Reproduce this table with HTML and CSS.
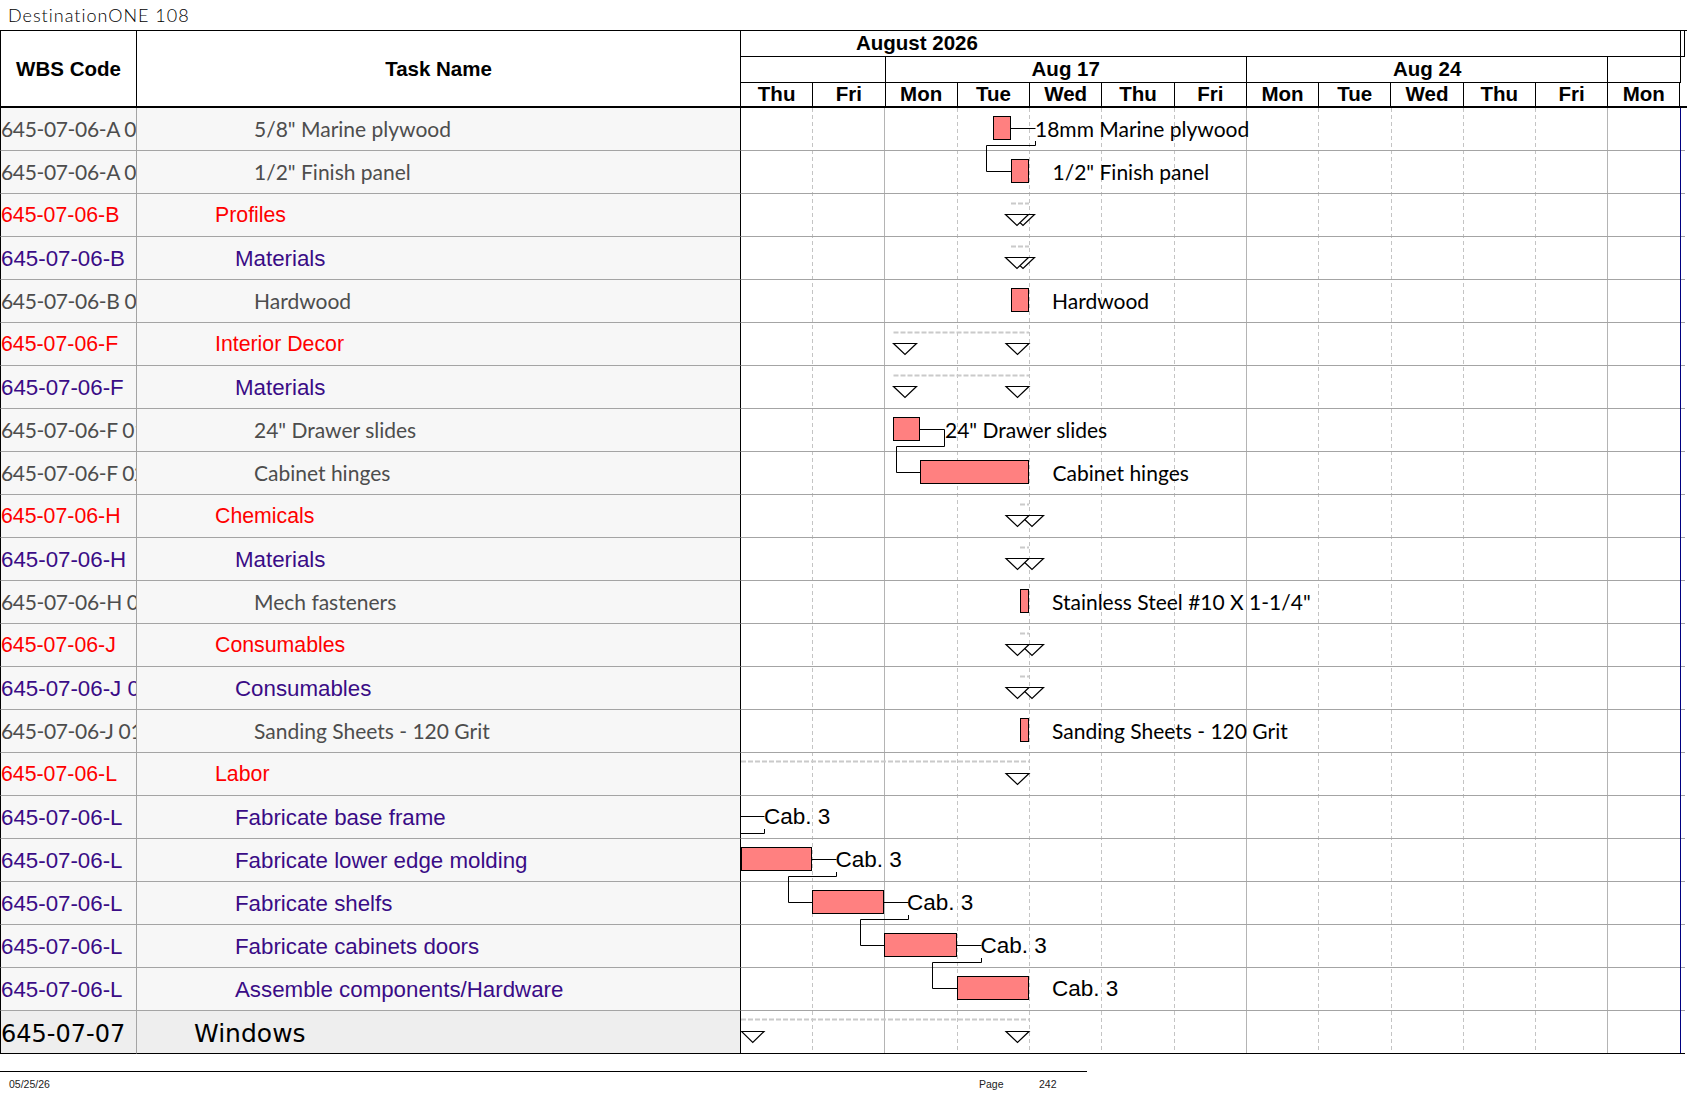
FILE: index.html
```html
<!DOCTYPE html>
<html>
<head>
<meta charset="utf-8">
<title>DestinationONE 108</title>
<link rel="stylesheet" href="styles.css">
</head>
<body>
<div class="title">DestinationONE 108</div>
<div class="sheet">
  <div class="hc hwbs">WBS Code</div>
  <div class="hc htask">Task Name</div>
  <div class="tl-head">
    <div class="tier1"><div class="month">August 2026</div></div>
    <div class="tier2">
      <div class="wk w2"></div><div class="wk w5">Aug 17</div><div class="wk w5">Aug 24</div><div class="wk w1"></div>
    </div>
    <div class="tier3">
      <div class="day">Thu</div><div class="day">Fri</div><div class="day">Mon</div><div class="day">Tue</div><div class="day">Wed</div><div class="day">Thu</div><div class="day">Fri</div><div class="day">Mon</div><div class="day">Tue</div><div class="day">Wed</div><div class="day">Thu</div><div class="day">Fri</div><div class="day">Mon</div>
    </div>
  </div>

  <div class="chart">
    <svg class="gantt" width="946" height="946" viewBox="0 0 946 946" xmlns="http://www.w3.org/2000/svg">
      <path class="vdash" d="M71.5 0V945M216.5 0V945M288.5 0V945M360.5 0V945M433.5 0V945M577.5 0V945M650.5 0V945M722.5 0V945M794.5 0V945"/>
      <path class="vsolid" d="M143.5 0V945M505.5 0V945M866.5 0V945"/>
      <path class="hgrid" d="M0 42.5H944M0 85.5H944M0 128.5H944M0 171.5H944M0 214.5H944M0 257.5H944M0 300.5H944M0 343.5H944M0 386.5H944M0 429.5H944M0 472.5H944M0 515.5H944M0 558.5H944M0 601.5H944M0 644.5H944M0 687.5H944M0 730.5H944M0 773.5H944M0 816.5H944M0 859.5H944M0 902.5H944"/>
      <path class="vnavy" d="M939.5 0V945"/>
      <path class="hbottom" d="M0 945.5H944"/>

      <path class="sumline" d="M270 95.5H288M270 138.5H288M152.5 224.5H288M152.5 267.5H288M279 396.5H288M279 439.5H288M279 525.5H288M279 568.5H288M0 653.5H288M0 911.5H288"/>
      <polygon class="ms" points="270.5,106.5 293.5,106.5 282,117.5"/>
      <polygon class="ms" points="264.5,106.5 287.5,106.5 276,117.5"/>
      <polygon class="ms" points="270.5,149.5 293.5,149.5 282,160.5"/>
      <polygon class="ms" points="264.5,149.5 287.5,149.5 276,160.5"/>
      <polygon class="ms" points="152.5,235.5 175.5,235.5 164,246.5"/>
      <polygon class="ms" points="265,235.5 288,235.5 276.5,246.5"/>
      <polygon class="ms" points="152.5,278.5 175.5,278.5 164,289.5"/>
      <polygon class="ms" points="265,278.5 288,278.5 276.5,289.5"/>
      <polygon class="ms" points="279.5,407.5 302.5,407.5 291,418.5"/>
      <polygon class="ms" points="265,407.5 288,407.5 276.5,418.5"/>
      <polygon class="ms" points="279.5,450.5 302.5,450.5 291,461.5"/>
      <polygon class="ms" points="265,450.5 288,450.5 276.5,461.5"/>
      <polygon class="ms" points="279.5,536.5 302.5,536.5 291,547.5"/>
      <polygon class="ms" points="265,536.5 288,536.5 276.5,547.5"/>
      <polygon class="ms" points="279.5,579.5 302.5,579.5 291,590.5"/>
      <polygon class="ms" points="265,579.5 288,579.5 276.5,590.5"/>
      <polygon class="ms" points="265,665.5 288,665.5 276.5,676.5"/>
      <polygon class="ms" points="0.5,923.5 23,923.5 11.75,934.5"/>
      <polygon class="ms" points="265,923.5 288,923.5 276.5,934.5"/>

      <path class="link" d="M269.5 20.5H294.5M294.5 33V37.5H245.5V63.5H270.5"/>
      <path class="link" d="M178.5 321.5H203.5V338.5H155.5V364.5H179.5"/>
      <path class="link" d="M0 708.5H23.5M23.5 721V725.5H0"/>
      <path class="link" d="M70.5 751.5H95.5M95.5 764V768.5H47.5V794.5H71.5"/>
      <path class="link" d="M142.5 794.5H167.5M167.5 807V811.5H119.5V837.5H143.5"/>
      <path class="link" d="M215.5 837.5H240.5M240.5 850V854.5H191.5V880.5H216.5"/>

      <rect class="bar" x="252.5" y="8.5" width="17" height="23"/>
      <rect class="bar" x="270.5" y="51.5" width="17" height="23"/>
      <rect class="bar" x="270.5" y="180.5" width="17" height="23"/>
      <rect class="bar" x="152.5" y="309.5" width="26" height="23"/>
      <rect class="bar" x="179.5" y="352.5" width="108" height="23"/>
      <rect class="bar" x="279.5" y="481.5" width="8" height="23"/>
      <rect class="bar" x="279.5" y="610.5" width="8" height="23"/>
      <rect class="bar" x="0.5" y="739.5" width="70" height="23"/>
      <rect class="bar" x="71.5" y="782.5" width="71" height="23"/>
      <rect class="bar" x="143.5" y="825.5" width="72" height="23"/>
      <rect class="bar" x="216.5" y="868.5" width="71" height="23"/>

      <text class="lbl" x="294" y="29">18mm Marine plywood</text>
      <text class="lbl" x="311.5" y="72">1/2" Finish panel</text>
      <text class="lbl" x="311" y="201">Hardwood</text>
      <text class="lbl" x="204" y="330">24" Drawer slides</text>
      <text class="lbl" x="311.5" y="373">Cabinet hinges</text>
      <text class="lbl" x="311" y="502">Stainless Steel #10 X 1-1/4"</text>
      <text class="lbl" x="311" y="631">Sanding Sheets - 120 Grit</text>
      <text class="lbl-a" x="23" y="716">Cab. 3</text>
      <text class="lbl-a" x="94.5" y="759">Cab. 3</text>
      <text class="lbl-a" x="166" y="802">Cab. 3</text>
      <text class="lbl-a" x="239.5" y="845">Cab. 3</text>
      <text class="lbl-a" x="311" y="888">Cab. 3</text>
    </svg>
  </div>

  <div class="c wbs l3">645-07-06-A 01</div><div class="c task l3">5/8" Marine plywood</div>
  <div class="c wbs l3">645-07-06-A 02</div><div class="c task l3">1/2" Finish panel</div>
  <div class="c wbs l1">645-07-06-B</div><div class="c task l1">Profiles</div>
  <div class="c wbs l2">645-07-06-B</div><div class="c task l2">Materials</div>
  <div class="c wbs l3">645-07-06-B 01</div><div class="c task l3">Hardwood</div>
  <div class="c wbs l1">645-07-06-F</div><div class="c task l1">Interior Decor</div>
  <div class="c wbs l2">645-07-06-F</div><div class="c task l2">Materials</div>
  <div class="c wbs l3">645-07-06-F 01</div><div class="c task l3">24" Drawer slides</div>
  <div class="c wbs l3">645-07-06-F 02</div><div class="c task l3">Cabinet hinges</div>
  <div class="c wbs l1">645-07-06-H</div><div class="c task l1">Chemicals</div>
  <div class="c wbs l2">645-07-06-H</div><div class="c task l2">Materials</div>
  <div class="c wbs l3">645-07-06-H 01</div><div class="c task l3">Mech fasteners</div>
  <div class="c wbs l1">645-07-06-J</div><div class="c task l1">Consumables</div>
  <div class="c wbs l2">645-07-06-J 01</div><div class="c task l2">Consumables</div>
  <div class="c wbs l3">645-07-06-J 01</div><div class="c task l3">Sanding Sheets - 120 Grit</div>
  <div class="c wbs l1">645-07-06-L</div><div class="c task l1">Labor</div>
  <div class="c wbs l2">645-07-06-L</div><div class="c task l2">Fabricate base frame</div>
  <div class="c wbs l2">645-07-06-L</div><div class="c task l2">Fabricate lower edge molding</div>
  <div class="c wbs l2">645-07-06-L</div><div class="c task l2">Fabricate shelfs</div>
  <div class="c wbs l2">645-07-06-L</div><div class="c task l2">Fabricate cabinets doors</div>
  <div class="c wbs l2">645-07-06-L</div><div class="c task l2">Assemble components/Hardware</div>
  <div class="c wbs l0">645-07-07</div><div class="c task l0">Windows</div>
</div>
<div class="foot-rule"></div>
<div class="foot">
  <span class="f-date">05/25/26</span>
  <span class="f-page">Page</span>
  <span class="f-num">242</span>
</div>
</body>
</html>
```

FILE: styles.css
```css
html, body {
  margin: 0;
  padding: 0;
  background: #fff;
}

body {
  width: 1687px;
  font-family: "Liberation Sans", Arial, sans-serif;
  color: #000;
}

.title {
  height: 30px;
  box-sizing: border-box;
  padding-left: 8px;
  font-family: Lato, "Liberation Sans", sans-serif;
  font-weight: 300;
  font-size: 18px;
  line-height: 30px;
  letter-spacing: 1px;
  color: #000;
  white-space: nowrap;
}

.sheet {
  display: grid;
  grid-template-columns: 137px 604px 946px;
  grid-template-rows: 77px repeat(22, 43px);
  border-top: 1px solid #000;
  width: 1687px;
}

.hc {
  box-sizing: border-box;
  border-bottom: 2px solid #000;
  display: flex;
  align-items: center;
  justify-content: center;
  font-family: "Liberation Sans", Arial, sans-serif;
  font-weight: bold;
  font-size: 20.5px;
  background: #fff;
}

.hwbs {
  border-left: 1px solid #000;
  border-right: 1px solid #000;
}

.htask {
  border-right: 1px solid #000;
}

.tl-head {
  box-sizing: border-box;
  border-bottom: 2px solid #000;
  background: #fff;
  font-family: "Liberation Sans", Arial, sans-serif;
  font-weight: bold;
  font-size: 20.5px;
}

.tier1 {
  display: flex;
  height: 26px;
  width: 944px;
  box-sizing: border-box;
  border-right: 1px solid #000;
  border-bottom: 1px solid #000;
}

.month {
  width: 939.64px;
  box-sizing: border-box;
  border-right: 1px solid #000;
  padding-left: 115px;
  line-height: 24px;
  white-space: nowrap;
}

.tier2 {
  display: flex;
  height: 26px;
  width: 939.64px;
  box-sizing: border-box;
  border-bottom: 1px solid #000;
}

.tier3 {
  display: flex;
  height: 23px;
  width: 939.64px;
}

.wk,
.day {
  box-sizing: border-box;
  border-right: 1px solid #000;
  text-align: center;
  white-space: nowrap;
  flex: none;
}

.wk {
  line-height: 24px;
}

.day {
  width: 72.28px;
  line-height: 22px;
}

.w1 { width: 72.28px; }
.w2 { width: 144.56px; }
.w5 { width: 361.4px; }

.chart {
  grid-column: 3;
  grid-row: 2 / span 22;
  background: #fff;
  overflow: hidden;
}

.gantt {
  display: block;
}

.vdash {
  fill: none;
  stroke: #c4c4c4;
  stroke-width: 1;
  stroke-dasharray: 4 3;
}

.vsolid {
  fill: none;
  stroke: #b4b4b4;
  stroke-width: 1;
}

.hgrid {
  fill: none;
  stroke: #a4a4a4;
  stroke-width: 1;
}

.vnavy {
  fill: none;
  stroke: #000080;
  stroke-width: 1;
}

.hbottom {
  fill: none;
  stroke: #000;
  stroke-width: 1;
}

.sumline {
  fill: none;
  stroke: #cacaca;
  stroke-width: 2;
  stroke-dasharray: 5 2;
}

.ms {
  fill: #fff;
  stroke: #000;
  stroke-width: 1.2;
  stroke-linejoin: miter;
}

.link {
  fill: none;
  stroke: #000;
  stroke-width: 1;
}

.bar {
  fill: #ff8080;
  stroke: #000;
  stroke-width: 1;
}

.lbl {
  font-family: Lato, "Liberation Sans", sans-serif;
  font-size: 21px;
  fill: #000;
}

.lbl-a {
  font-family: "Liberation Sans", Arial, sans-serif;
  font-size: 22.5px;
  fill: #000;
}

.c {
  box-sizing: border-box;
  border-bottom: 1px solid #a4a4a4;
  background: #f7f7f7;
  white-space: nowrap;
  overflow: hidden;
}

.wbs {
  border-left: 1px solid #000;
  border-right: 1px solid #a4a4a4;
}

.task {
  border-right: 1px solid #000;
}

.l1 {
  color: #ff0000;
  font-family: "Liberation Sans", Arial, sans-serif;
  font-size: 21.3px;
  line-height: 43px;
}

.l2 {
  color: #3a0c86;
  font-family: "Liberation Sans", Arial, sans-serif;
  font-size: 22.3px;
  line-height: 43px;
}

.l3 {
  color: #4d4d4d;
  font-family: Lato, "Liberation Sans", sans-serif;
  font-size: 21px;
  line-height: 42px;
}

.wbs.l3 {
  letter-spacing: -0.35px;
}

.l0 {
  color: #000;
  font-family: "DejaVu Sans", "Liberation Sans", sans-serif;
  font-size: 25px;
  line-height: 46px;
  background: #eeeeee;
  border-bottom: 1px solid #000;
}

.wbs.l0 {
  font-size: 24px;
}

.task.l1 { padding-left: 78px; }
.task.l2 { padding-left: 98px; }
.task.l3 { padding-left: 117px; }
.task.l0 { padding-left: 57px; }

.foot-rule {
  margin-top: 17px;
  width: 1087px;
  border-top: 1px solid #000;
}

.foot {
  display: grid;
  grid-template-columns: 979px 60px auto;
  margin-top: 6px;
  font-family: "Liberation Sans", Arial, sans-serif;
  font-size: 10.5px;
  line-height: 12px;
  color: #222;
}

.f-date {
  padding-left: 9px;
}
```
